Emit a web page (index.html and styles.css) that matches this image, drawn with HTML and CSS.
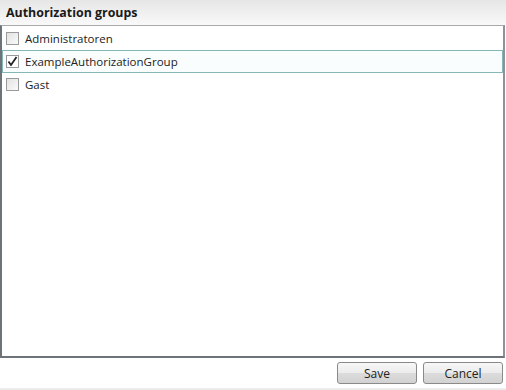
FILE: index.html
```html
<!DOCTYPE html>
<html lang="en">

<head>
    <meta charset="UTF-8">
    <meta name="viewport" content="width=device-width, initial-scale=1.0">
    <title>Authorization groups</title>
    <link rel="stylesheet" href="styles.css">
</head>

<body>
    <div class="dlg">
        <!-- 타이틀 -->
        <div class="head">
            <h1>Authorization groups</h1>
        </div>

        <!-- 목록 -->
        <div class="list">
            <label class="row">
                <span class="chk"></span>
                <span class="txt">Administratoren</span>
            </label>
            <label class="row sel">
                <span class="chk on">
                    <svg width="11" height="11" viewBox="0 0 11 11">
                        <path d="M1.5 5.5 L4 9 L9.5 1" fill="none" stroke="#222" stroke-width="1.8" />
                    </svg>
                </span>
                <span class="txt">ExampleAuthorizationGroup</span>
            </label>
            <label class="row">
                <span class="chk"></span>
                <span class="txt">Gast</span>
            </label>
        </div>

        <!-- 버튼 -->
        <div class="foot">
            <button class="btn">Save</button>
            <button class="btn">Cancel</button>
        </div>
    </div>
</body>

</html>
```

FILE: styles.css
```css
html,
body {
    margin: 0;
    padding: 0;
    background: #fff;
}

.dlg {
    width: 506px;
    height: 390px;
    display: flex;
    flex-direction: column;
    font-family: "Open Sans", "DejaVu Sans", sans-serif;
    font-size: 11.5px;
    color: #222;
}

/* 타이틀 */
.head {
    height: 25px;
    background: linear-gradient(#e6e6e6, #f9f9f9);
    display: flex;
    align-items: center;
    padding-left: 6px;
}

.head h1 {
    margin: 0;
    font-size: 12.4px;
    font-weight: bold;
    color: #1a1a1a;
}

/* 목록 */
.list {
    height: 329px;
    margin-right: 1px;
    border: 1px solid #a9a9a9;
    border-left: 2px solid #6e7377;
    border-bottom: 2px solid #6e7377;
    border-right: 2px solid #8e9296;
    padding-top: 1px;
}

.row {
    display: flex;
    align-items: center;
    gap: 6px;
    height: 21px;
    padding-left: 3px;
    border: 1px solid transparent;
}

.row.sel {
    border-color: #86b7b7;
    background: #f9fdfd;
}

.chk {
    width: 11px;
    height: 11px;
    border: 1px solid #9a9a9a;
    background: linear-gradient(135deg, #e2e2e2, #fafafa);
    display: flex;
    align-items: center;
    justify-content: center;
}

.chk.on {
    background: #fff;
}

/* 버튼 */
.foot {
    flex: 1;
    display: flex;
    justify-content: flex-end;
    align-items: flex-start;
    gap: 6px;
    padding: 4px 3px 0 0;
    border-bottom: 2px solid #ececec;
    box-sizing: border-box;
}

.btn {
    width: 80px;
    height: 22px;
    padding: 0;
    font-family: inherit;
    font-size: 12px;
    color: #222;
    border: 1px solid #8a8a8a;
    border-radius: 3px;
    background: linear-gradient(#f7f7f7 0%, #ececec 50%, #dcdcdc 51%, #d2d2d2 100%);
}
```
